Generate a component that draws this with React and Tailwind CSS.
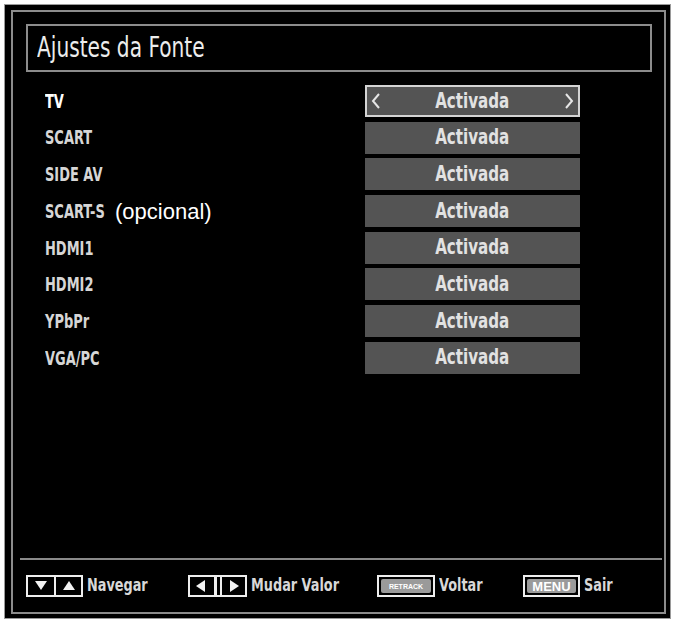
import React from "react";

const narrow = { fontFamily: "'Liberation Sans Narrow', 'DejaVu Sans Condensed', sans-serif" };

const sources = [
  { label: "TV", selected: true },
  { label: "SCART" },
  { label: "SIDE AV" },
  { label: "SCART-S", note: "(opcional)" },
  { label: "HDMI1" },
  { label: "HDMI2" },
  { label: "YPbPr" },
  { label: "VGA/PC" },
];

function Chevron({ dir }) {
  return (
    <svg width="10" height="16" viewBox="0 0 10 16" className="shrink-0">
      <polyline
        points={dir === "left" ? "8,1 2,8 8,15" : "2,1 8,8 2,15"}
        fill="none"
        stroke="#e6e6e6"
        strokeWidth="2"
      />
    </svg>
  );
}

function Tri({ dir }) {
  const pts = {
    down: "1,2 13,2 7,11",
    up: "1,11 13,11 7,2",
    left: "11,1 11,13 2,7",
    right: "3,1 3,13 12,7",
  }[dir];
  return (
    <svg width="14" height="14" viewBox="0 0 14 14">
      <polygon points={pts} fill="#f2f2f2" />
    </svg>
  );
}

function SourceRow({ label, note, selected }) {
  return (
    <div className="flex h-[32px] items-center">
      <div className="flex w-[352px] items-center whitespace-nowrap pl-[32px]">
        <span className={note ? "w-[70px] shrink-0" : ""}>
          <span
            style={narrow}
            className={`inline-block origin-left scale-x-[0.76] text-[19px] font-bold ${
              selected ? "text-white" : "text-[#d6d6d6]"
            }`}
          >
            {label}
          </span>
        </span>
        {note && (
          <span className="text-[22px] text-white" style={{ fontFamily: "'Liberation Sans', sans-serif" }}>
            {note}
          </span>
        )}
      </div>
      <div
        className={`flex h-[32px] w-[215px] items-center justify-between bg-[#545454] px-[4px] ${
          selected ? "border-2 border-[#d4d4d4]" : ""
        }`}
      >
        <span className="w-[10px]">{selected && <Chevron dir="left" />}</span>
        <span style={narrow} className="inline-block scale-x-[0.82] whitespace-nowrap text-[20.5px] font-bold text-[#e2e2e2]">
          Activada
        </span>
        <span className="w-[10px]">{selected && <Chevron dir="right" />}</span>
      </div>
    </div>
  );
}

function KeyLabel({ children }) {
  return (
    <span
      style={narrow}
      className="ml-[4px] inline-block origin-left scale-x-[0.84] whitespace-nowrap text-[17px] font-bold text-[#d8d8d8]"
    >
      {children}
    </span>
  );
}

export default function App() {
  return (
    <div className="h-[620px] w-[674px] bg-white pl-[4px] pt-[4px]">
      <div className="flex h-[615px] w-[667px] flex-col border border-[#9a9a9a] bg-black pb-[4px] pl-[6px] pr-[4px] pt-[5px]">
        <div className="flex flex-1 flex-col border-2 border-[#8c8c8c]">
          {/* Title */}
          <div className="ml-[13px] mr-[12px] mt-[12px] flex h-[48px] items-center border-2 border-[#8c8c8c] px-[9px]">
            <span style={narrow} className="inline-block origin-left scale-x-[0.8] whitespace-nowrap text-[28px] text-[#ececec]">
              Ajustes da Fonte
            </span>
          </div>

          {/* Sources */}
          <div className="mt-[13px] flex flex-col gap-[4.7px]">
            {sources.map((s) => (
              <SourceRow key={s.label} {...s} />
            ))}
          </div>

          <div className="flex-1" />

          <div className="ml-[7px] mr-[2px] h-[2px] bg-[#8a8a8a]" />

          {/* Footer */}
          <div className="flex h-[52px] items-center pl-[13px]">
            <div className="flex w-[162px] items-center">
              <div className="flex h-[22px] border-2 border-[#eeeeee]">
                <div className="flex w-[26px] items-center justify-center">
                  <Tri dir="down" />
                </div>
                <div className="flex w-[27px] items-center justify-center border-l-2 border-[#eeeeee]">
                  <Tri dir="up" />
                </div>
              </div>
              <KeyLabel>Navegar</KeyLabel>
            </div>

            <div className="flex w-[189px] items-center">
              <div className="flex h-[22px] w-[59px] items-center justify-between border-2 border-[#eeeeee] px-[4px]">
                <Tri dir="left" />
                <div className="flex h-full gap-[3px]">
                  <div className="w-[3px] bg-[#eeeeee]" />
                  <div className="w-[2px] bg-[#eeeeee]" />
                </div>
                <Tri dir="right" />
              </div>
              <KeyLabel>Mudar Valor</KeyLabel>
            </div>

            <div className="flex w-[146px] items-center">
              <div className="flex h-[22px] w-[58px] items-center border-2 border-[#eeeeee] p-[2px]">
                <div className="flex h-full flex-1 items-center justify-center rounded-[2px] bg-[#9a9a9a]">
                  <span className="text-[7px] font-bold leading-none text-white" style={{ fontFamily: "'Liberation Sans', sans-serif" }}>
                    RETRACK
                  </span>
                </div>
              </div>
              <KeyLabel>Voltar</KeyLabel>
            </div>

            <div className="flex items-center">
              <div className="flex h-[22px] w-[57px] items-center border-2 border-[#eeeeee] p-[2px]">
                <div className="flex h-full flex-1 items-center justify-center rounded-[2px] bg-[#9a9a9a]">
                  <span className="text-[13px] font-bold leading-none text-white" style={{ fontFamily: "'Liberation Sans', sans-serif" }}>
                    MENU
                  </span>
                </div>
              </div>
              <KeyLabel>Sair</KeyLabel>
            </div>
          </div>
        </div>
      </div>
    </div>
  );
}
